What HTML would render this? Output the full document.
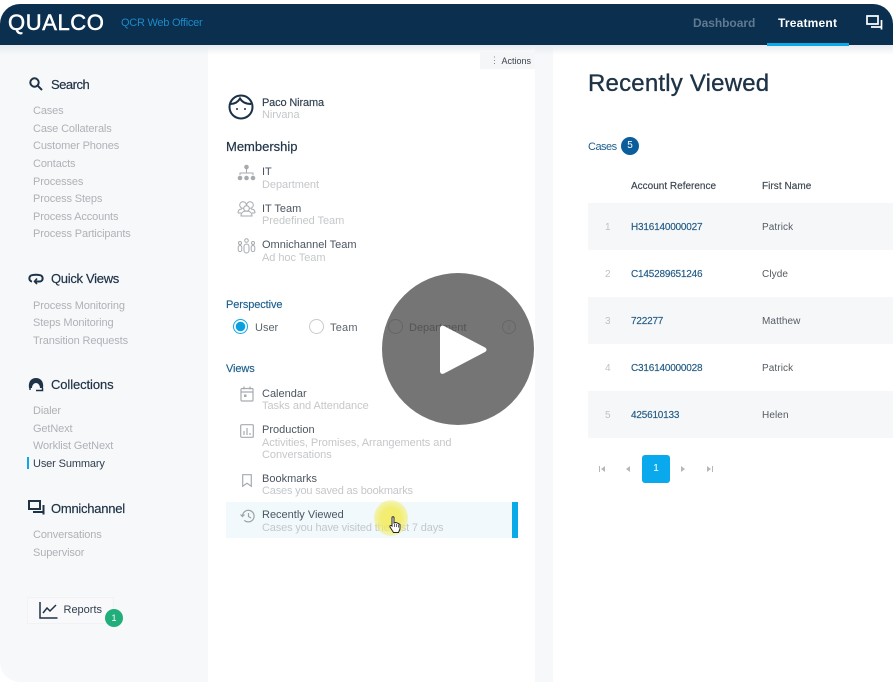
<!DOCTYPE html>
<html><head><meta charset="utf-8">
<style>
html,body{margin:0;padding:0;background:#fff;width:893px;height:686px;overflow:hidden}
#f{position:absolute;left:0;top:0;width:893px;height:686px;overflow:hidden;font-family:"Liberation Sans","Noto Sans CJK JP",sans-serif;filter:blur(.35px)}
.b{position:absolute}
.t{position:absolute;white-space:nowrap;line-height:16px;height:16px;margin-top:1px}
.n{font-size:11px;color:#aeb2b6;left:33px;letter-spacing:-.13px}
.h{font-size:13px;color:#1f3347;left:51px;-webkit-text-stroke:.2px #1f3347}
.m{font-size:13px;color:#1f3347;left:226px;letter-spacing:0;-webkit-text-stroke:.2px #1f3347;margin-top:0}
.p{font-size:11px;color:#4b5560;left:262px;letter-spacing:0}
.s{font-size:11px;color:#c4c7ca;left:262px;letter-spacing:-.05px}
.sec{font-size:11px;color:#1c5f8e;left:226px;letter-spacing:-.1px;-webkit-text-stroke:.15px #1c5f8e}
.l{font-size:10px;color:#215a85;left:631px;letter-spacing:-.2px;-webkit-text-stroke:.15px #215a85}
.c{font-size:10px;color:#555c63;left:762px;letter-spacing:.1px}
.i{font-size:10px;color:#bfc2c5;left:605px}
.r{position:absolute;left:588px;width:305px;background:#f6f7f9}
.hd{margin-top:0}
svg{position:absolute;overflow:visible}
</style></head><body><div id="f">
<div class="b" style="left:0;top:4px;width:893px;height:678px;background:#fff;border-radius:20px 20px 0 0;overflow:hidden">
<div class="b" style="left:0;top:0;width:208px;height:678px;background:#f7f8fa;border-radius:0 0 0 20px"></div>
<div class="b" style="left:535px;top:0;width:18px;height:678px;background:#f7f8fa"></div>
<div class="b" style="left:0;top:41px;width:893px;height:10px;background:linear-gradient(#e6ebf0,rgba(240,243,246,0))"></div>
<div class="b" style="left:0;top:0;width:893px;height:41px;background:#0a2f4f"></div>
<div class="b" style="left:767px;top:39px;width:82px;height:3px;background:#0fa8e6"></div>
</div>

<div class="t hd" style="left:8px;top:9px;height:28px;line-height:28px;font-size:22px;color:#fff;letter-spacing:.6px;-webkit-text-stroke:.5px #fff">QUALCO</div>
<div class="t hd" style="left:121px;top:15px;font-size:11px;color:#1d8ac9;letter-spacing:-.25px">QCR Web Officer</div>
<div class="t hd" style="left:693px;top:15px;font-size:12px;font-weight:bold;color:#617a90;letter-spacing:-.05px">Dashboard</div>
<div class="t hd" style="left:778px;top:15px;font-size:12px;font-weight:bold;color:#fff;letter-spacing:.2px">Treatment</div>
<svg style="left:866px;top:15px" width="17" height="15" viewBox="0 0 17 15" fill="none" stroke="#fff" stroke-width="1.7"><path d="M1 1h11v8H1z"/><path d="M15.5 5v9.500M15.500 12H5"/></svg>

<!-- sidebar -->
<svg style="left:29px;top:77px" width="14" height="14" viewBox="0 0 14 14" fill="none" stroke="#1f3347" stroke-width="2"><circle cx="5.5" cy="5.5" r="4.2"/><path d="M8.7 8.7l4.3 4.3"/></svg>
<div class="t h" style="top:76px;letter-spacing:-.5px">Search</div>
<div class="t n" style="top:102px">Cases</div>
<div class="t n" style="top:120px">Case Collaterals</div>
<div class="t n" style="top:137px">Customer Phones</div>
<div class="t n" style="top:155px">Contacts</div>
<div class="t n" style="top:173px">Processes</div>
<div class="t n" style="top:190px">Process Steps</div>
<div class="t n" style="top:208px">Process Accounts</div>
<div class="t n" style="top:225px">Process Participants</div>

<svg style="left:28px;top:273px" width="16" height="12" viewBox="0 0 16 12" fill="none" stroke="#1f3347" stroke-width="2"><path d="M4 8.500C.5 8 .5 3 4 2.200c3-.7 5-.7 8 0 3.500.8 3.500 5.800 0 6.300H7"/><path d="M9 5.500L6.500 8.500 9 11" stroke-width="1.600"/></svg>
<div class="t h" style="top:270px;letter-spacing:-.3px">Quick Views</div>
<div class="t n" style="top:297px">Process Monitoring</div>
<div class="t n" style="top:314px">Steps Monitoring</div>
<div class="t n" style="top:332px">Transition Requests</div>

<svg style="left:28px;top:377px" width="16" height="15" viewBox="0 0 16 15"><path d="M1 11C0 5 3 1 8 1s8 4 7 10h-3c0-3-2-5-4-5s-4 2-4 5z" fill="#1f3347"/><path d="M1 12h2M14.500 11v2.500H8" stroke="#1f3347" stroke-width="1.500" fill="none"/></svg>
<div class="t h" style="top:376px;letter-spacing:-.1px">Collections</div>
<div class="t n" style="top:402px">Dialer</div>
<div class="t n" style="top:420px">GetNext</div>
<div class="t n" style="top:437px">Worklist GetNext</div>
<div class="b" style="left:27px;top:457px;width:2px;height:12px;background:#0fa8e6"></div>
<div class="t n" style="top:455px;color:#2f3f4f">User Summary</div>

<svg style="left:28px;top:500px" width="17" height="15" viewBox="0 0 17 15" fill="none" stroke="#1f3347" stroke-width="2"><path d="M1 1h11v8H1z"/><path d="M15.500 5v9.500M15.500 12H5"/></svg>
<div class="t h" style="top:500px;letter-spacing:-.25px">Omnichannel</div>
<div class="t n" style="top:526px">Conversations</div>
<div class="t n" style="top:544px">Supervisor</div>

<div class="b" style="left:27px;top:597px;width:85px;height:25px;border:1px solid #f1f2f4;background:#f9f9fb"></div>
<svg style="left:39px;top:601px" width="19" height="18" viewBox="0 0 19 18" fill="none" stroke="#1f3347" stroke-width="1.500"><path d="M1 1v16h17.500"/><path d="M4 12l4-5 3 3 6-6"/></svg>
<div class="t" style="left:63.500px;top:601px;font-size:11px;color:#2f3f4f">Reports</div>
<div class="b" style="left:105px;top:609px;width:18px;height:18px;border-radius:50%;background:#22ae7a;color:#fff;font-size:9px;line-height:18px;text-align:center">1</div>

<!-- middle -->
<div class="b" style="left:480px;top:52px;width:55px;height:17px;background:#f5f6f7"></div>
<div class="t hd" style="left:490px;top:52px;font-size:9px;color:#7b8085">⋮</div>
<div class="t hd" style="left:501.500px;top:52.500px;font-size:9px;color:#39434d">Actions</div>

<svg style="left:228px;top:94px" width="26" height="26" viewBox="0 0 26 26" fill="none" stroke="#1b3147" stroke-width="2"><circle cx="13" cy="13" r="11.500"/><path d="M2.500 10C7 10 10 8 12 4.500c2 3.500 6 5.500 11 5.500"/><circle cx="9" cy="15" r="1" fill="#1b3147" stroke="none"/><circle cx="17" cy="15" r="1" fill="#1b3147" stroke="none"/></svg>
<div class="t" style="left:262px;top:94px;font-size:11px;color:#2f3f4f;letter-spacing:-.15px;-webkit-text-stroke:.15px #2f3f4f">Paco Nirama</div>
<div class="t s" style="top:106px">Nirvana</div>
<div class="t m" style="top:139px">Membership</div>

<svg style="left:237px;top:164px" width="19" height="18" viewBox="0 0 19 18" fill="#a6abb0" stroke="none"><circle cx="9.500" cy="3" r="2.300"/><circle cx="3" cy="14" r="2.300"/><circle cx="9.500" cy="14" r="2.300"/><circle cx="16" cy="14" r="2.300"/><path d="M9.500 5v4M3 11V9h13v2" fill="none" stroke="#a6abb0" stroke-width="1"/></svg>
<div class="t p" style="top:163px">IT</div>
<div class="t s" style="top:175.500px">Department</div>

<svg style="left:237px;top:201px" width="19" height="16" viewBox="0 0 19 16" fill="none" stroke="#a6abb0" stroke-width="1"><circle cx="6" cy="4" r="3.300"/><circle cx="13" cy="4" r="3.300"/><circle cx="9.500" cy="7.500" r="2.800" fill="#fff"/><path d="M1 12c0-3 2-4 4-4M18 12c0-3-2-4-4-4M4 15c0-3 2-5 5.500-5s5.500 2 5.500 5zM1 12h3M18 12h-3"/></svg>
<div class="t p" style="top:200px">IT Team</div>
<div class="t s" style="top:212px">Predefined Team</div>

<svg style="left:237px;top:238px" width="19" height="16" viewBox="0 0 19 16" fill="none" stroke="#a6abb0" stroke-width="1"><circle cx="9.500" cy="2.500" r="1.800"/><circle cx="3" cy="5" r="1.500"/><circle cx="16" cy="5" r="1.500"/><rect x="1.200" y="7.500" width="3.600" height="6" rx="1.800"/><rect x="14.200" y="7.500" width="3.600" height="6" rx="1.800"/><rect x="7" y="6" width="5" height="9" rx="2.500"/></svg>
<div class="t p" style="top:236px">Omnichannel Team</div>
<div class="t s" style="top:248.500px">Ad hoc Team</div>

<div class="t sec" style="top:296px">Perspective</div>
<div class="b" style="left:233px;top:319px;width:15px;height:15px;border:1px solid #0fa8e6;border-radius:50%;box-sizing:border-box;background:radial-gradient(circle,#0c9fe0 4.500px,#fff 5px)"></div>
<div class="t p" style="left:255px;top:319px;color:#5b646d">User</div>
<div class="b" style="left:308.500px;top:319px;width:15px;height:15px;border:1px solid #c8cbce;border-radius:50%;box-sizing:border-box"></div>
<div class="t p" style="left:330px;top:319px;color:#5b646d;letter-spacing:.2px">Team</div>

<div class="t sec" style="top:360px">Views</div>
<svg style="left:240px;top:386px" width="14" height="16" viewBox="0 0 14 16" fill="none" stroke="#a6abb0" stroke-width="1.200"><rect x="1" y="2.500" width="12" height="12.500" rx="1"/><path d="M1 6h12M4 .5v3M10 .5v3"/><rect x="4" y="8.500" width="2.500" height="2.500" fill="#a6abb0" stroke="none"/></svg>
<div class="t p" style="top:384.500px">Calendar</div>
<div class="t s" style="top:397px">Tasks and Attendance</div>

<svg style="left:240px;top:424px" width="14" height="14" viewBox="0 0 14 14" fill="none" stroke="#a6abb0" stroke-width="1.200"><rect x=".7" y=".7" width="12.600" height="12.600" rx="1"/><path d="M4 11V7M7 11V4M10 11V9"/></svg>
<div class="t p" style="top:421px">Production</div>
<div class="t s" style="top:433.500px">Activities, Promises, Arrangements and</div>
<div class="t s" style="top:446px">Conversations</div>

<svg style="left:242px;top:474px" width="10" height="13" viewBox="0 0 10 13" fill="none" stroke="#a6abb0" stroke-width="1.200"><path d="M.7.7h8.600v11.500L5 9.200.7 12.200z"/></svg>
<div class="t p" style="top:470px">Bookmarks</div>
<div class="t s" style="top:482px;letter-spacing:-.18px">Cases you saved as bookmarks</div>

<div class="b" style="left:226px;top:502px;width:286px;height:36px;background:#f1f9fd"></div>
<div class="b" style="left:512px;top:502px;width:6px;height:36px;background:#0aa9e8"></div>
<svg style="left:240px;top:509px" width="15" height="14" viewBox="0 0 15 14" fill="none" stroke="#9ea3a8" stroke-width="1.200"><path d="M2.500 7a5.800 5.800 0 1 1 1.800 4.300"/><path d="M.5 5.500l2 2 2-2M8.500 4v3.500l2.500 1.500"/></svg>
<div class="t p" style="top:506px">Recently Viewed</div>
<div class="t s" style="top:519px;letter-spacing:-.15px">Cases you have visited the last 7 days</div>
<div class="b" style="left:374px;top:500px;width:34px;height:36px;border-radius:50%;background:radial-gradient(circle,rgba(243,236,90,.85) 40%,rgba(243,236,90,0) 100%)"></div>
<svg style="left:389px;top:516px" width="12" height="18" viewBox="0 0 12 18"><path d="M3 1.500c0-1 2-1 2 0V7l1.500-.5 1.500.3 1.500.7 1.500 1V13l-1.500 3.500H4.500L1 11c-.7-1.500 1-2 2-1z" fill="#fff" stroke="#222" stroke-width="1"/><path d="M5.500 8v3M7.500 8v3M9.500 8.500v3" stroke="#222" stroke-width=".7"/></svg>

<!-- play -->
<div class="b" style="left:382px;top:273px;width:152px;height:152px;border-radius:50%;background:#757575"></div>
<div class="b" style="left:388px;top:319px;width:15px;height:15px;border:1px solid #656565;border-radius:50%;box-sizing:border-box"></div>
<div class="t" style="left:409px;top:319px;font-size:11px;color:#545454">Department</div>
<div class="b" style="left:502px;top:320px;width:14px;height:14px;border:1px solid #676767;border-radius:50%;box-sizing:border-box;font-size:9px;line-height:12px;text-align:center;color:#676767">i</div>
<svg style="left:436px;top:325px" width="50" height="50" viewBox="0 0 50 50"><path d="M4 3.500C4 1 6 0 8 1l41 21.500c2 1.200 2 3.300 0 4.500L8 48.500c-2 1-4 0-4-2.500z" fill="#fff"/></svg>

<!-- right -->
<div class="t" style="left:588px;top:68px;height:30px;line-height:30px;font-size:24px;color:#1f3347;letter-spacing:.2px;-webkit-text-stroke:.35px #1f3347">Recently Viewed</div>
<div class="t" style="left:588px;top:138px;font-size:11px;color:#1c5f8e;letter-spacing:-.5px">Cases</div>
<div class="b" style="left:621px;top:137px;width:18px;height:18px;border-radius:50%;background:#0a5e9c;color:#fff;font-size:10px;line-height:18px;text-align:center">5</div>
<div class="t" style="left:631px;top:178px;font-size:10px;color:#3a444e;letter-spacing:0;-webkit-text-stroke:.15px #3a444e">Account Reference</div>
<div class="t" style="left:762px;top:178px;font-size:10px;color:#3a444e;letter-spacing:.05px;-webkit-text-stroke:.15px #3a444e">First Name</div>

<div class="r" style="top:203px;height:47px"></div>
<div class="r" style="top:297px;height:47px"></div>
<div class="r" style="top:391px;height:47px"></div>

<div class="t i" style="top:219px">1</div><div class="t l" style="top:219px">H316140000027</div><div class="t c" style="top:219px">Patrick</div>
<div class="t i" style="top:266px">2</div><div class="t l" style="top:266px">C145289651246</div><div class="t c" style="top:266px">Clyde</div>
<div class="t i" style="top:313px">3</div><div class="t l" style="top:313px">722277</div><div class="t c" style="top:313px">Matthew</div>
<div class="t i" style="top:360px">4</div><div class="t l" style="top:360px">C316140000028</div><div class="t c" style="top:360px">Patrick</div>
<div class="t i" style="top:407px">5</div><div class="t l" style="top:407px">425610133</div><div class="t c" style="top:407px">Helen</div>

<svg style="left:598px;top:465px" width="116" height="8" viewBox="0 0 116 8" fill="#b5b8bb"><path d="M1 1h1v6H1zM7 1v6L3 4zM32 1v6l-4-3zM83 1v6l4-3zM109 1v6l4-3zM114 1h1v6h-1z"/></svg>
<div class="b" style="left:642px;top:455px;width:28px;height:28px;border-radius:3px;background:#0aa9ee;color:#fff;font-size:10px;line-height:28px;text-align:center">1</div>
</div></body></html>
